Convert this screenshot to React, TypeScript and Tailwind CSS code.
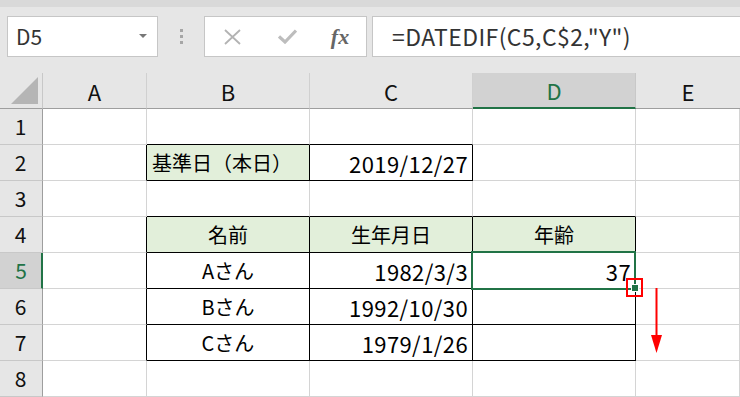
import React from "react";

const colWidths = [43, 104, 163, 163, 163, 104];
const colLetters = ["A", "B", "C", "D", "E"];

type Cell = { text: string; align: "left" | "center" | "right"; fill?: boolean; num?: boolean };

const data: Record<string, Cell> = {
  "2-1": { text: "基準日（本日）", align: "left", fill: true },
  "2-2": { text: "2019/12/27", align: "right", num: true },
  "4-1": { text: "名前", align: "center", fill: true },
  "4-2": { text: "生年月日", align: "center", fill: true },
  "4-3": { text: "年齢", align: "center", fill: true },
  "5-1": { text: "Aさん", align: "center" },
  "5-2": { text: "1982/3/3", align: "right", num: true },
  "5-3": { text: "37", align: "right", num: true },
  "6-1": { text: "Bさん", align: "center" },
  "6-2": { text: "1992/10/30", align: "right", num: true },
  "7-1": { text: "Cさん", align: "center" },
  "7-2": { text: "1979/1/26", align: "right", num: true },
};

function isBox(r: number, c: number) {
  if (r === 2 && (c === 1 || c === 2)) return true;
  if (r >= 4 && r <= 7 && c >= 1 && c <= 3) return true;
  return false;
}

const font = "font-['Noto_Sans_CJK_JP','Noto_Sans',sans-serif]";

function GridCell({ r, c }: { r: number; c: number }) {
  const cell = data[`${r}-${c}`];
  const rightBlack = isBox(r, c) || isBox(r, c + 1);
  const bottomBlack = isBox(r, c) || isBox(r + 1, c);
  const selected = r === 5 && c === 3;
  return (
    <div
      className={`${selected ? "relative z-10" : ""} flex items-center border-r border-b ${
        rightBlack ? "border-r-black" : "border-r-[#d4d4d4]"
      } ${bottomBlack ? "border-b-black" : "border-b-[#d4d4d4]"} ${
        cell?.fill ? "bg-[#e2efda]" : "bg-white"
      } ${
        cell?.align === "left"
          ? "justify-start pl-[5px]"
          : cell?.align === "right"
          ? "justify-end pr-[4px]"
          : "justify-center"
      } text-black leading-none`}
    >
      {cell && (
        <span
          className={`whitespace-nowrap ${cell.num ? "text-[22px] tracking-[0.4px]" : "text-[20px]"}`}
        >
          {cell.text}
        </span>
      )}
      {selected && (
        <>
          <div className="absolute left-[-2px] top-[-2px] right-[-1px] bottom-[-2px] border-2 border-[#217346]" />
          <div className="absolute left-[153px] top-[25px] w-[17px] h-[19px] border-2 border-[#ff0000]" />
          <div className="absolute left-[159px] top-[32px] w-[6px] h-[6px] bg-[#217346] outline outline-1 outline-white" />
          <svg className="absolute left-[178px] top-[35px]" width="11" height="66" viewBox="0 0 11 66">
            <rect x="4.5" y="0" width="2" height="50" fill="#ff0000" />
            <polygon points="0,47 11,47 5.5,65" fill="#ff0000" />
          </svg>
        </>
      )}
    </div>
  );
}

export default function App() {
  const rows = [1, 2, 3, 4, 5, 6, 7, 8];
  return (
    <div className={`w-[740px] h-[397px] overflow-hidden bg-[#e6e6e6] ${font}`}>
      <div className="h-[7px] bg-[#d9d9d9]" />
      {/* formula bar */}
      <div className="h-[66px] flex items-start pt-[9px]">
        <div className="ml-[7px] w-[151px] h-[41px] bg-white border border-[#c6c6c6] flex items-center justify-between pl-[8px] pr-[10px]">
          <span className="text-[21px] text-[#333] leading-none">D5</span>
          <svg width="8" height="5" viewBox="0 0 8 5">
            <polygon points="0,0 8,0 4,4" fill="#777" />
          </svg>
        </div>
        <div className="w-[46px] h-[41px] flex flex-col items-center justify-center gap-[3px]">
          <div className="w-[3px] h-[3px] bg-[#a6a6a6]" />
          <div className="w-[3px] h-[3px] bg-[#a6a6a6]" />
          <div className="w-[3px] h-[3px] bg-[#a6a6a6]" />
        </div>
        <div className="w-[163px] h-[41px] bg-white border border-[#c6c6c6] flex items-center">
          <div className="w-[55px] flex justify-center">
            <svg width="17" height="16" viewBox="0 0 17 16">
              <path d="M1 1 L16 15 M16 1 L1 15" stroke="#b3b3b3" strokeWidth="1.8" />
            </svg>
          </div>
          <div className="w-[55px] flex justify-center">
            <svg width="19" height="15" viewBox="0 0 19 15">
              <path d="M1 7.5 L7 13 L18 1.5" stroke="#bdbdbd" strokeWidth="3.2" fill="none" />
            </svg>
          </div>
          <div className="w-[50px] flex justify-center">
            <span className="font-['Liberation_Serif',serif] italic font-bold text-[22px] text-[#666] leading-none">
              fx
            </span>
          </div>
        </div>
        <div className="ml-[5px] flex-1 h-[41px] bg-white border border-[#c6c6c6] border-r-0 flex items-center pl-[19px]">
          <span className="text-[23px] tracking-[0.4px] text-[#333] leading-none whitespace-nowrap">
            =DATEDIF(C5,C$2,"Y")
          </span>
        </div>
      </div>
      {/* sheet */}
      <div
        className="grid"
        style={{ gridTemplateColumns: colWidths.map((w) => `${w}px`).join(" "), gridTemplateRows: "36px repeat(8, 36px)" }}
      >
        {/* corner */}
        <div className="bg-[#e6e6e6] border-r border-b border-r-[#c8c8c8] border-b-[#9e9e9e] flex items-end justify-end pr-[3px] pb-[3px]">
          <svg width="28" height="28" viewBox="0 0 28 28">
            <polygon points="27,0 27,27 0,27" fill="#b5b5b5" />
          </svg>
        </div>
        {colLetters.map((l, i) =>
          l === "D" ? (
            <div
              key={l}
              className="bg-[#d2d2d2] border-b-2 border-b-[#217346] border-r border-r-[#c8c8c8] flex items-center justify-center text-[22px] text-[#217346] leading-none"
            >
              {l}
            </div>
          ) : (
            <div
              key={l}
              className={`bg-[#e6e6e6] border-b border-b-[#9e9e9e] ${
                i === 4 ? "" : "border-r border-r-[#d0d0d0]"
              } flex items-center justify-center text-[22px] text-[#111] leading-none`}
            >
              {l}
            </div>
          )
        )}
        {rows.map((r) => (
          <React.Fragment key={r}>
            {r === 5 ? (
              <div className="bg-[#d2d2d2] border-r-2 border-r-[#217346] border-b border-b-[#c8c8c8] flex items-center justify-center text-[21px] text-[#217346] leading-none pl-[1px]">
                {r}
              </div>
            ) : (
              <div className="bg-[#e6e6e6] border-r border-r-[#9e9e9e] border-b border-b-[#c8c8c8] flex items-center justify-center text-[21px] text-[#111] leading-none pr-[1px]">
                {r}
              </div>
            )}
            {[0, 1, 2, 3, 4].map((c) => (
              <GridCell key={c} r={r} c={c} />
            ))}
          </React.Fragment>
        ))}
      </div>
    </div>
  );
}
